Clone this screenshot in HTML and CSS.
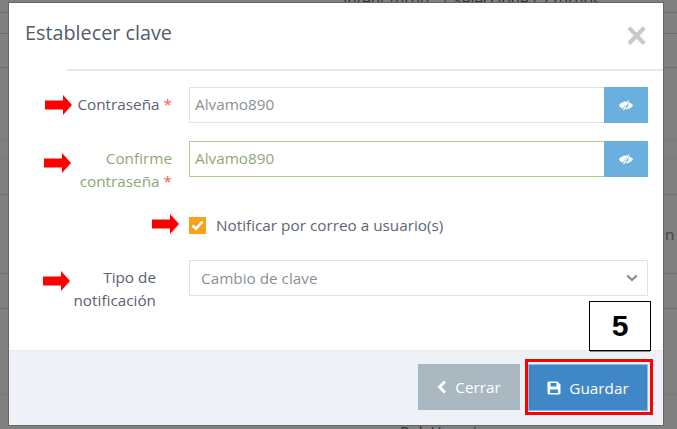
FILE: index.html
```html
<!DOCTYPE html>
<html lang="es">
<head>
  <meta charset="UTF-8">
  <title>Establecer clave</title>
  <link rel="stylesheet" href="styles.css">
</head>
<body>

  <!-- page behind the modal -->
  <div class="behind">
    <div class="behind-top">Intent turno &nbsp; | Seleccione · 2 turnos</div>
    <div class="behind-right">n</div>
    <div class="behind-bottom">Rol: Usuario</div>
  </div>

  <div class="modal">
    <div class="modal-header">
      <h4>Establecer clave</h4>
      <span class="close">&times;</span>
    </div>
    <div class="header-line"></div>

    <div class="modal-body">
      <div class="form-row">
        <label class="form-label">Contraseña <span class="req">*</span></label>
        <div class="input-group">
          <div class="input">Alvamo890</div>
          <div class="addon">
            <svg width="16" height="13" viewBox="0 0 18 14"><path fill="#fff" d="M9 2.600C5.200 2.600 2.400 5 1 7c1 1.500 2.400 2.800 4.200 3.600L10.800 2.800C10.200 2.700 9.600 2.600 9 2.600zM11.800 1L5.600 11.800l1.100.7L12.900 1.700zM12.400 3.700L11.300 5.700C11.800 6.500 11.700 7.700 11 8.600 10.500 9.200 9.900 9.600 9.100 9.800L8 11.400C11.800 11.500 15.300 9.200 17 7 16 5.600 14.400 4.400 12.400 3.700z"/></svg>
          </div>
        </div>
      </div>

      <div class="form-row ok">
        <label class="form-label">Confirme<br>contraseña <span class="req">*</span></label>
        <div class="input-group">
          <div class="input">Alvamo890</div>
          <div class="addon">
            <svg width="16" height="13" viewBox="0 0 18 14"><path fill="#fff" d="M9 2.600C5.200 2.600 2.400 5 1 7c1 1.500 2.400 2.800 4.200 3.600L10.800 2.800C10.200 2.700 9.600 2.600 9 2.600zM11.800 1L5.600 11.800l1.100.7L12.900 1.700zM12.400 3.700L11.300 5.700C11.800 6.500 11.700 7.700 11 8.600 10.500 9.200 9.900 9.600 9.100 9.800L8 11.400C11.800 11.500 15.300 9.200 17 7 16 5.600 14.400 4.400 12.400 3.700z"/></svg>
          </div>
        </div>
      </div>

      <div class="check-row">
        <span class="checkbox">
          <svg width="13" height="11" viewBox="0 0 13 11"><path fill="none" stroke="#fff" stroke-width="2.600" d="M1.500 5.500l3.500 3.200 6.500-7"/></svg>
        </span>
        <span class="check-text">Notificar por correo a usuario(s)</span>
      </div>

      <div class="form-row select-row">
        <label class="form-label">Tipo de<br>notificación</label>
        <div class="select">
          <span>Cambio de clave</span>
          <svg width="12" height="8" viewBox="0 0 12 8"><path fill="none" stroke="#8a8a8a" stroke-width="2.200" d="M1.200 1.500L6 6l4.800-4.500"/></svg>
        </div>
      </div>
    </div>

    <div class="modal-footer">
      <button class="btn btn-close">
        <svg width="10" height="14" viewBox="0 0 10 14"><path fill="none" stroke="#fff" stroke-width="3" d="M8 1.500L2.500 7 8 12.500"/></svg>
        Cerrar
      </button>
      <button class="btn btn-save">
        <svg width="14" height="14" viewBox="0 0 14 14"><path fill="#fff" fill-rule="evenodd" d="M1.500 0.500H10.500L13.500 3.500V12a1.500 1.500 0 0 1-1.500 1.500H2A1.500 1.500 0 0 1 .5 12V1.500a1 1 0 0 1 1-1zM3.500 2V5.500H9.500V2zM3 8.500V12H11V8.500z"/></svg>
        Guardar
      </button>
    </div>

    <!-- marks added on top of the screenshot -->
    <svg class="arrow arrow-1" width="28" height="20" viewBox="0 0 28 20"><path fill="#f00" d="M0 5.500H18V0L27 10 18 20V14.500H0z"/></svg>
    <svg class="arrow arrow-2" width="28" height="20" viewBox="0 0 28 20"><path fill="#f00" d="M0 5.500H18V0L27 10 18 20V14.500H0z"/></svg>
    <svg class="arrow arrow-3" width="28" height="20" viewBox="0 0 28 20"><path fill="#f00" d="M0 5.500H18V0L27 10 18 20V14.500H0z"/></svg>
    <svg class="arrow arrow-4" width="28" height="20" viewBox="0 0 28 20"><path fill="#f00" d="M0 5.500H18V0L27 10 18 20V14.500H0z"/></svg>
    <div class="step-box">5</div>
    <div class="save-mark"></div>
  </div>

</body>
</html>
```

FILE: styles.css
```css
html, body {
  height: 100%;
}

body {
  margin: 0;
  width: 677px;
  height: 429px;
  overflow: hidden;
  position: relative;
  box-sizing: border-box;
  padding: 3px 0 0 9px;
  font-family: 'Open Sans', sans-serif;
  font-size: 15.3px;
  color: #5a6270;
  background-color: #808080;
}

.behind {
  position: absolute;
  inset: 0;
  background-image:
    linear-gradient(#6b6b6b, #6b6b6b),
    linear-gradient(#6b6b6b, #6b6b6b),
    linear-gradient(#6b6b6b, #6b6b6b),
    linear-gradient(#74797e, #74797e),
    linear-gradient(#74797e, #74797e),
    linear-gradient(#707070, #707070),
    linear-gradient(#707070, #707070),
    linear-gradient(#707070, #707070),
    linear-gradient(#74797e, #74797e);
  background-repeat: no-repeat;
  background-size: 100% 1px;
  background-position: 0 12px, 0 33px, 0 67px, 0 140px, 0 158px, 0 194px, 0 273px, 0 308px, 0 394px;
}

.behind-top {
  position: absolute;
  top: -10px;
  left: 343px;
  color: #333;
  white-space: nowrap;
}

.behind-right {
  position: absolute;
  top: 224px;
  left: 665px;
  color: #3f444a;
}

.behind-bottom {
  position: absolute;
  top: 421px;
  left: 400px;
  color: #333;
  white-space: nowrap;
}

.modal {
  position: relative;
  width: 654px;
  height: 422px;
  background: white;
  box-shadow: 0 0 0 1px #666;
  display: flex;
  flex-direction: column;
}

.modal-header {
  height: 66px;
  box-sizing: border-box;
  padding: 16px 16px 0 16px;
  display: flex;
  justify-content: space-between;
}

.modal-header h4 {
  margin: 0;
  font-size: 19.8px;
  font-weight: 400;
  line-height: 28px;
  color: #535c69;
}

.close {
  font-family: 'Liberation Sans', sans-serif;
  font-size: 36px;
  font-weight: 700;
  line-height: 34px;
  color: #c8c8c8;
}

.header-line {
  height: 2px;
  margin-left: 58px;
  background-color: #e8e8e8;
}

.modal-body {
  flex: 1;
  padding: 16px 15px 0 0;
}

.form-row {
  display: flex;
  gap: 17px;
  margin-bottom: 18px;
}

.form-label {
  width: 163px;
  text-align: right;
  line-height: 23px;
  padding-top: 6px;
  flex-shrink: 0;
}

.req {
  color: #f0605a;
}

.input-group {
  flex: 1;
  display: flex;
  height: 36px;
}

.input {
  flex: 1;
  box-sizing: border-box;
  border: 1px solid #e2e2e2;
  border-right: none;
  padding: 0 5px;
  line-height: 33px;
  color: #8a8f98;
}

.addon {
  width: 44px;
  background-color: #6bafdf;
  display: flex;
  align-items: center;
  justify-content: center;
}

.ok .form-label {
  color: #8fa878;
}

.ok .input {
  border-color: #a9cf8a;
  color: #8fa878;
}

.check-row {
  display: flex;
  align-items: center;
  gap: 10px;
  height: 18px;
  margin: 23px 0 26px 180px;
}

.checkbox {
  width: 17px;
  height: 17px;
  background-color: #f9a11f;
  display: flex;
  align-items: center;
  justify-content: center;
}

.check-text {
  color: #5d6475;
}

.select-row {
  margin-bottom: 0;
  gap: 14px;
}

.select {
  flex: 1;
  height: 36px;
  box-sizing: border-box;
  border: 1px solid #e2e2e2;
  padding: 0 9px 1px 11px;
  display: flex;
  align-items: center;
  justify-content: space-between;
  color: #8a8f98;
}

.select-row .form-label {
  width: 147px;
  padding-right: 19px;
}

.modal-footer {
  height: 75px;
  box-sizing: border-box;
  background-color: #eef1f6;
  border-top: 1px solid #e6e9ee;
  padding: 13px 15px 0 0;
  display: flex;
  justify-content: flex-end;
  align-items: flex-start;
  gap: 8px;
}

.btn {
  height: 46px;
  border: none;
  color: white;
  font-family: 'Open Sans', sans-serif;
  font-size: 15.3px;
  display: flex;
  align-items: center;
  justify-content: center;
  gap: 8px;
}

.btn-close {
  width: 102px;
  background-color: #aab9c1;
}

.btn-save {
  width: 120px;
  height: 47px;
  background-color: #3f87c6;
  border: 1px solid #8fbce0;
}

.arrow {
  position: absolute;
}

.arrow-1 { left: 36px; top: 92px; }
.arrow-2 { left: 35px; top: 150px; }
.arrow-3 { left: 143px; top: 211px; }
.arrow-4 { left: 34px; top: 268px; }

.step-box {
  position: absolute;
  left: 580px;
  top: 298px;
  width: 62px;
  height: 50px;
  box-sizing: border-box;
  border: 1px solid black;
  background: white;
  color: black;
  font-family: 'Liberation Sans', sans-serif;
  font-size: 30px;
  font-weight: 700;
  line-height: 48px;
  text-align: center;
  box-shadow: 0 2px 0 -1px #8a8a8a;
}

.save-mark {
  position: absolute;
  left: 516px;
  top: 356px;
  width: 128px;
  height: 56px;
  box-sizing: border-box;
  border: 3px solid #f00;
}
```
